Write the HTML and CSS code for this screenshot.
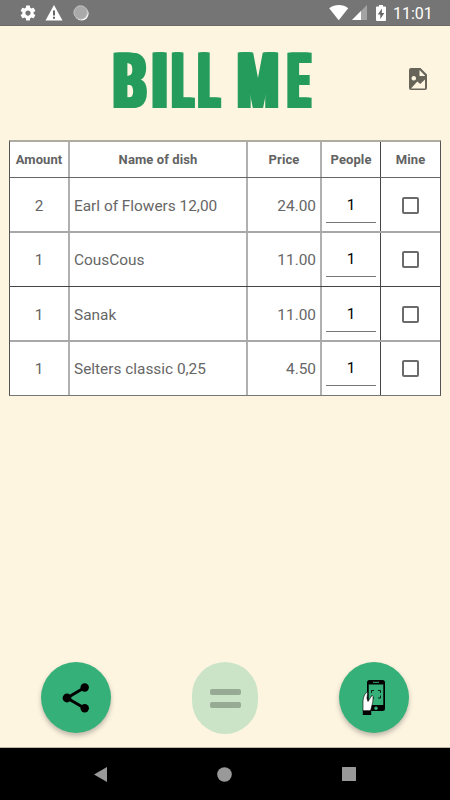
FILE: index.html
```html
<!DOCTYPE html>
<html lang="en">
<head>
  <meta charset="UTF-8">
  <title>Bill Me</title>
  <link rel="stylesheet" href="styles.css">
</head>
<body>

  <div class="statusbar">
    <svg class="gear" width="18" height="18" viewBox="0 0 24 24"><path fill="#fff" d="M19.43 12.98c.04-.32.07-.64.07-.98s-.03-.66-.07-.98l2.11-1.65c.19-.15.24-.42.12-.64l-2-3.46c-.12-.22-.39-.3-.61-.22l-2.49 1c-.52-.4-1.08-.73-1.69-.98l-.38-2.65C14.46 2.18 14.25 2 14 2h-4c-.25 0-.46.18-.49.42l-.38 2.65c-.61.25-1.17.59-1.69.98l-2.49-1c-.23-.09-.49 0-.61.22l-2 3.46c-.13.22-.07.49.12.64l2.11 1.65c-.04.32-.07.65-.07.98s.03.66.07.98l-2.11 1.65c-.19.15-.24.42-.12.64l2 3.46c.12.22.39.3.61.22l2.49-1c.52.4 1.08.73 1.69.98l.38 2.65c.03.24.24.42.49.42h4c.25 0 .46-.18.49-.42l.38-2.65c.61-.25 1.17-.59 1.69-.98l2.49 1c.23.09.49 0 .61-.22l2-3.46c.12-.22.07-.49-.12-.64l-2.11-1.65zM12 15.500c-1.930 0-3.500-1.570-3.500-3.500s1.570-3.500 3.500-3.500 3.500 1.570 3.500 3.500-1.570 3.500-3.500 3.500z"/></svg>
    <svg class="warning" width="18" height="18" viewBox="0 0 18 18"><path fill="#fff" d="M.5 16.500h17L9 1z"/><path d="M9 6.500v5M9 12.700v2" stroke="#666" stroke-width="2"/></svg>
    <svg class="sync" width="16" height="16" viewBox="0 0 16 16">
      <circle cx="8.6" cy="8.6" r="7" fill="#fff"/>
      <circle cx="7.600" cy="7.500" r="7.200" fill="#a9a9a9"/>
      <circle cx="7.600" cy="7.500" r="6.500" fill="none" stroke="#d2d2d2" stroke-width="1" stroke-dasharray="1 1"/>
    </svg>
    <span class="spacer"></span>
    <svg class="wifi" width="20" height="16" viewBox="0 0 20 16"><path fill="#fff" d="M.2 3.200C6-1 14-1 19.200 3.200L9.700 15.200z"/></svg>
    <svg class="signal" width="15" height="15" viewBox="0 0 15 15"><path fill="#a3a3a3" d="M15 0v15H0z"/><path fill="#fff" d="M9 6v9H0z"/></svg>
    <svg class="battery" width="10" height="16" viewBox="0 0 10 16"><path fill="#fff" d="M3 0h4v1.500h2q1 0 1 1V15q0 1-1 1H1q-1 0-1-1V2.500q0-1 1-1h2z"/><path fill="#666" d="M6 3.500L1.800 9.500h2.500V14l4-6H5.800z"/></svg>
    <span class="clock">11:01</span>
  </div>

  <header class="header">
    <svg class="title" width="204" height="60" viewBox="0 0 204 60">
      <g id="logo">
        <text transform="translate(1.300 58) scale(.67 1)">B</text>
        <text transform="translate(39.500 58) scale(.7 1)">I</text>
        <text transform="translate(60.200 58) scale(.5 1)">L</text>
        <text transform="translate(86.600 58) scale(.5 1)">L</text>
        <text transform="translate(125.800 58) scale(.6 1)">M</text>
        <text transform="translate(175.800 58) scale(.51 1)">E</text>
      </g>
      <!-- shifted copies make the stems heavier -->
      <use href="#logo" x="-2.500"/>
      <use href="#logo" x="-1.200"/>
      <use href="#logo" x="1.200"/>
      <use href="#logo" x="2.500"/>
    </svg>
    <svg class="picture" width="18" height="22" viewBox="0 0 18 22">
      <path fill="#67645a" fill-rule="evenodd" d="M2 0H11.500L18 6.500V20q0 2-2 2H2q-2 0-2-2V2q0-2 2-2zM10.500 2V8H16.300zM2 20.500H16V11.500L11.200 16 8.300 13.500zM4.800 8a2.300 2.300 0 1 0 .01 0z"/>
    </svg>
  </header>

  <div class="bill">
    <div class="row head">
      <div class="cell">Amount</div>
      <div class="cell">Name of dish</div>
      <div class="cell">Price</div>
      <div class="cell">People</div>
      <div class="cell">Mine</div>
    </div>
    <div class="row soft">
      <div class="cell">2</div>
      <div class="cell name">Earl of Flowers 12,00</div>
      <div class="cell price">24.00</div>
      <div class="cell"><span class="people">1</span></div>
      <div class="cell"><span class="check"></span></div>
    </div>
    <div class="row">
      <div class="cell">1</div>
      <div class="cell name">CousCous</div>
      <div class="cell price">11.00</div>
      <div class="cell"><span class="people">1</span></div>
      <div class="cell"><span class="check"></span></div>
    </div>
    <div class="row soft">
      <div class="cell">1</div>
      <div class="cell name">Sanak</div>
      <div class="cell price">11.00</div>
      <div class="cell"><span class="people">1</span></div>
      <div class="cell"><span class="check"></span></div>
    </div>
    <div class="row">
      <div class="cell">1</div>
      <div class="cell name">Selters classic 0,25</div>
      <div class="cell price">4.50</div>
      <div class="cell"><span class="people">1</span></div>
      <div class="cell"><span class="check"></span></div>
    </div>
  </div>

  <div class="actions">
    <div class="fab">
      <svg width="28" height="30" viewBox="0 0 28 30">
        <path d="M22.700 4.500L5 15l17.700 10.300" fill="none" stroke="#000" stroke-width="3"/>
        <circle cx="22.700" cy="4.500" r="4.200"/><circle cx="5" cy="15" r="4.400"/><circle cx="22.700" cy="25.300" r="4.200"/>
      </svg>
    </div>
    <div class="fab disabled">
      <span class="bar"></span>
      <span class="bar"></span>
    </div>
    <div class="fab">
      <svg width="24" height="36" viewBox="0 0 24 36">
        <path fill-rule="evenodd" d="M7.500 0h13q2.500 0 2.500 2.500v26q0 2.500-2.500 2.500h-13Q5 31 5 28.500v-26Q5 0 7.500 0zM6.700 4.500V25h14.600V4.500z"/>
        <path d="M11 2.300h6" stroke="#36b079" stroke-width="1"/>
        <circle cx="14" cy="28.200" r="1.700" fill="#36b079"/>
        <path d="M9.500 13v-2.500H12M16 10.500h2.500V13M18.500 15.500V18H16M12 18H9.500v-2.500" fill="none" stroke="#000" stroke-width=".8"/>
        <path fill="#fff" stroke="#000" stroke-width=".6" d="M1 31V21q0-3 1.500-6l2-2.700q1.200-.5 1 1.200L5 18.500l1 3 3.500-5.500q1.500-1 1.600.5L10.800 22 9.500 27l-1 4z"/>
        <path d="M.8 30.500h8.400V35H.8z"/>
      </svg>
    </div>
  </div>

  <div class="navbar">
    <svg width="13" height="15" viewBox="0 0 13 15"><path fill="#999" d="M13 0v15L0 7.500z"/></svg>
    <svg width="15" height="15" viewBox="0 0 15 15"><circle cx="7.500" cy="7.500" r="7.300" fill="#999"/></svg>
    <svg width="14" height="14" viewBox="0 0 14 14"><rect width="14" height="14" rx=".5" fill="#999"/></svg>
  </div>

</body>
</html>
```
FILE: styles.css
```css
* {
  margin: 0;
  padding: 0;
  box-sizing: border-box;
}
body {
  font-family: Roboto, sans-serif;
  width: 450px;
  height: 800px;
  display: flex;
  flex-direction: column;
  background: #fef5e1;
  color: #666;
  overflow: hidden;
}
svg {
  display: block;
  flex: none;
}

.statusbar {
  height: 26px;
  display: flex;
  align-items: center;
  padding: 0 18px 0 19px;
  background: #757575;
  border-bottom: 1px solid #6c6a66;
  color: #fff;
}
.warning {
  margin-left: 8px;
}
.sync {
  margin-left: 10px;
}
.spacer {
  flex: 1;
}
.signal {
  margin-left: 3px;
}
.battery {
  margin-left: 9px;
}
.clock {
  margin-left: 7px;
  width: 39px;
  font-size: 16px;
  white-space: nowrap;
  padding-top: 2px;
}

.header {
  height: 114px;
  display: flex;
  align-items: center;
  padding: 0 23px 6px 112px;
  justify-content: space-between;
}
.title {
  overflow: visible;
}
.title text {
  font-family: Roboto, sans-serif;
  font-size: 77px;
  font-weight: 900;
  fill: #259c5b;
}
.picture {
  margin-top: -3px;
}

.bill {
  margin: 0 9px;
  border: 1px solid #555;
  border-top: 2px solid #aeaba2;
  border-bottom-color: #777;
  background: #fff;
}
.row {
  height: 54px;
  display: grid;
  grid-template-columns: 60px 178px 74px 59px 1fr;
  border-bottom: 1px solid #444;
}
.row.soft {
  height: 55px;
  border-bottom: 2px solid #a8a8a8;
}
.row.head {
  height: 36px;
  border-bottom-color: #666;
}
.row:last-child {
  height: 53px;
  border-bottom: none;
}
.cell {
  display: flex;
  align-items: center;
  justify-content: center;
  border-right: 2px solid #b0b0b0;
  font-size: 15.4px;
}
.soft .cell {
  padding-top: 2px;
}
.head .cell {
  font-size: 13px;
  font-weight: 700;
  letter-spacing: 0.1px;
  color: #626262;
}
.cell:nth-child(4) {
  border-right: 1px solid #444;
}
.cell:last-child {
  border-right: none;
}
.name {
  justify-content: flex-start;
  padding-left: 4px;
}
.price {
  justify-content: flex-end;
  padding-right: 4px;
}
.people {
  width: 50px;
  height: 35px;
  padding-top: 8px;
  border-bottom: 1px solid #777;
  text-align: center;
  line-height: 19px;
  color: #000;
}
.check {
  width: 17px;
  height: 17px;
  border: 2px solid #6b6b6b;
  border-radius: 2px;
}

.actions {
  margin-top: auto;
  height: 86px;
  padding: 0 41px;
  display: flex;
  justify-content: space-between;
  border-bottom: 1px solid #bdb6a5;
}
.fab {
  width: 70px;
  height: 71px;
  display: flex;
  align-items: center;
  justify-content: center;
  border-radius: 50%;
  background: #36b079;
  box-shadow: 0 3px 5px rgba(0,0,0,0.25);
}
.fab.disabled {
  width: 66px;
  height: 72px;
  flex-direction: column;
  gap: 7px;
  border-radius: 33px;
  background: #cbe4c7;
  box-shadow: none;
}
.bar {
  width: 31px;
  height: 6px;
  border-radius: 2px;
  background: #97aa94;
}

.navbar {
  height: 52px;
  display: flex;
  align-items: center;
  justify-content: space-between;
  padding: 0 94px;
  background: #000;
}
```
